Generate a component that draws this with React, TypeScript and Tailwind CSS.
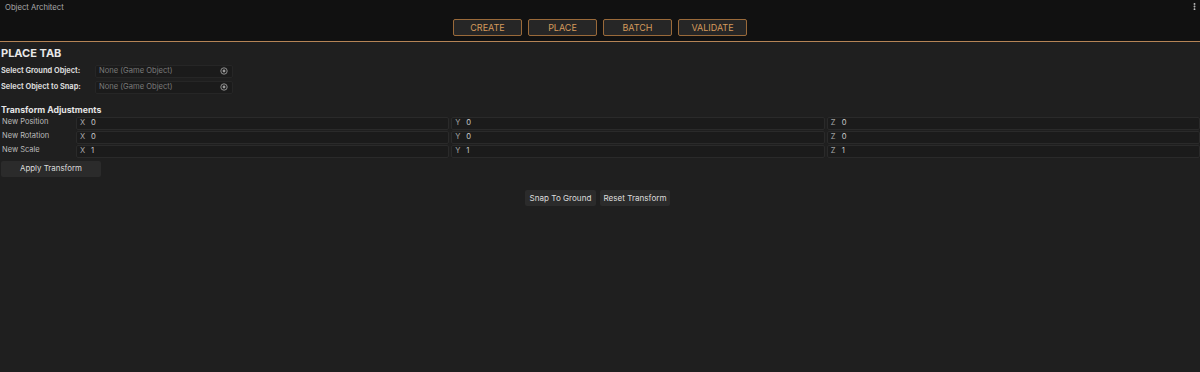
import { EllipsisVertical } from "lucide-react";

const tabs = ["CREATE", "PLACE", "BATCH", "VALIDATE"];

function ObjectField({ label }: { label: string }) {
  return (
    <div className="flex items-center h-[14px] mb-[2px]">
      <div className="w-[95px] shrink-0 font-bold text-[7.4px] text-[#d8d8d8] pl-[1px]">{label}</div>
      <div className="w-[138px] h-[13px] flex items-center justify-between bg-[#1b1b1b] border border-[#262626] rounded-[2px] px-[3px]">
        <span className="text-[7.6px] text-[#7a7a7a]">None (Game Object)</span>
        <svg width="8" height="8" viewBox="0 0 8 8" className="mr-[1px]">
          <circle cx="4" cy="4" r="3.2" fill="none" stroke="#9a9a9a" strokeWidth="0.9" />
          <circle cx="4" cy="4" r="1.4" fill="#9a9a9a" />
        </svg>
      </div>
    </div>
  );
}

function VecField({ axis, value }: { axis: string; value: string }) {
  return (
    <div className="flex-1 h-[13px] flex items-center bg-[#1b1b1b] border border-[#2a2a2a] rounded-[2px] pl-[3px]">
      <span className="w-[11px] text-[7.6px] text-[#a8a8a8]">{axis}</span>
      <span className="text-[7.6px] text-[#c8c8c8]">{value}</span>
    </div>
  );
}

function VecRow({ label, v }: { label: string; v: string }) {
  return (
    <div className="flex items-center h-[14px]">
      <div className="w-[76px] shrink-0 text-[7.5px] text-[#bcbcbc] pl-[2px] -mt-[2px]">{label}</div>
      <div className="flex-1 flex gap-[2px]">
        <VecField axis="X" value={v} />
        <VecField axis="Y" value={v} />
        <VecField axis="Z" value={v} />
      </div>
    </div>
  );
}

export default function App() {
  return (
    <div
      className="w-[1200px] h-[372px] bg-[#1f1f1f] text-white overflow-hidden"
      style={{ fontFamily: "Inter, 'Liberation Sans', sans-serif" }}
    >
      <div className="h-[41px] bg-[#111111] relative">
        <div className="pl-[5px] pt-[2px] text-[7.7px] text-[#a9a9a9] leading-[12px]">Object Architect</div>
        <EllipsisVertical className="absolute right-[1px] top-[2px] text-[#c8c8c8]" size={9} strokeWidth={3} />
        <div className="flex justify-center gap-[6px] mt-[5px]">
          {tabs.map((t) => (
            <button
              key={t}
              className="w-[69px] h-[17px] flex items-center justify-center bg-[#262626] border border-[#9a6a3a] rounded-[2px] text-[9px] text-[#d49a5c]"
            >
              {t}
            </button>
          ))}
        </div>
      </div>
      <div className="h-[1px] bg-[#b58456]" />

      <div className="pt-[5px]">
        <div className="pl-[1px] font-bold text-[11px] text-[#e8e8e8] leading-[13px]">PLACE TAB</div>
        <div className="mt-[4px]">
          <ObjectField label="Select Ground Object:" />
          <ObjectField label="Select Object to Snap:" />
        </div>

        <div className="mt-[10px] pl-[1px] font-bold text-[8.7px] text-[#e4e4e4] leading-[12px]">Transform Adjustments</div>
        <div>
          <VecRow label="New Position" v="0" />
          <VecRow label="New Rotation" v="0" />
          <VecRow label="New Scale" v="1" />
        </div>

        <button className="ml-[1px] mt-[3px] w-[100px] h-[16px] bg-[#2b2b2b] rounded-[2px] text-[7.9px] text-[#dcdcdc] flex items-center justify-center">
          Apply Transform
        </button>

        <div className="mt-[13px] flex justify-center gap-[4px] pr-[5px]">
          <button className="w-[71px] h-[16px] bg-[#2b2b2b] rounded-[2px] text-[8.1px] text-[#dcdcdc] flex items-center justify-center">
            Snap To Ground
          </button>
          <button className="w-[70px] h-[16px] bg-[#2b2b2b] rounded-[2px] text-[8.1px] text-[#dcdcdc] flex items-center justify-center">
            Reset Transform
          </button>
        </div>
      </div>
    </div>
  );
}
